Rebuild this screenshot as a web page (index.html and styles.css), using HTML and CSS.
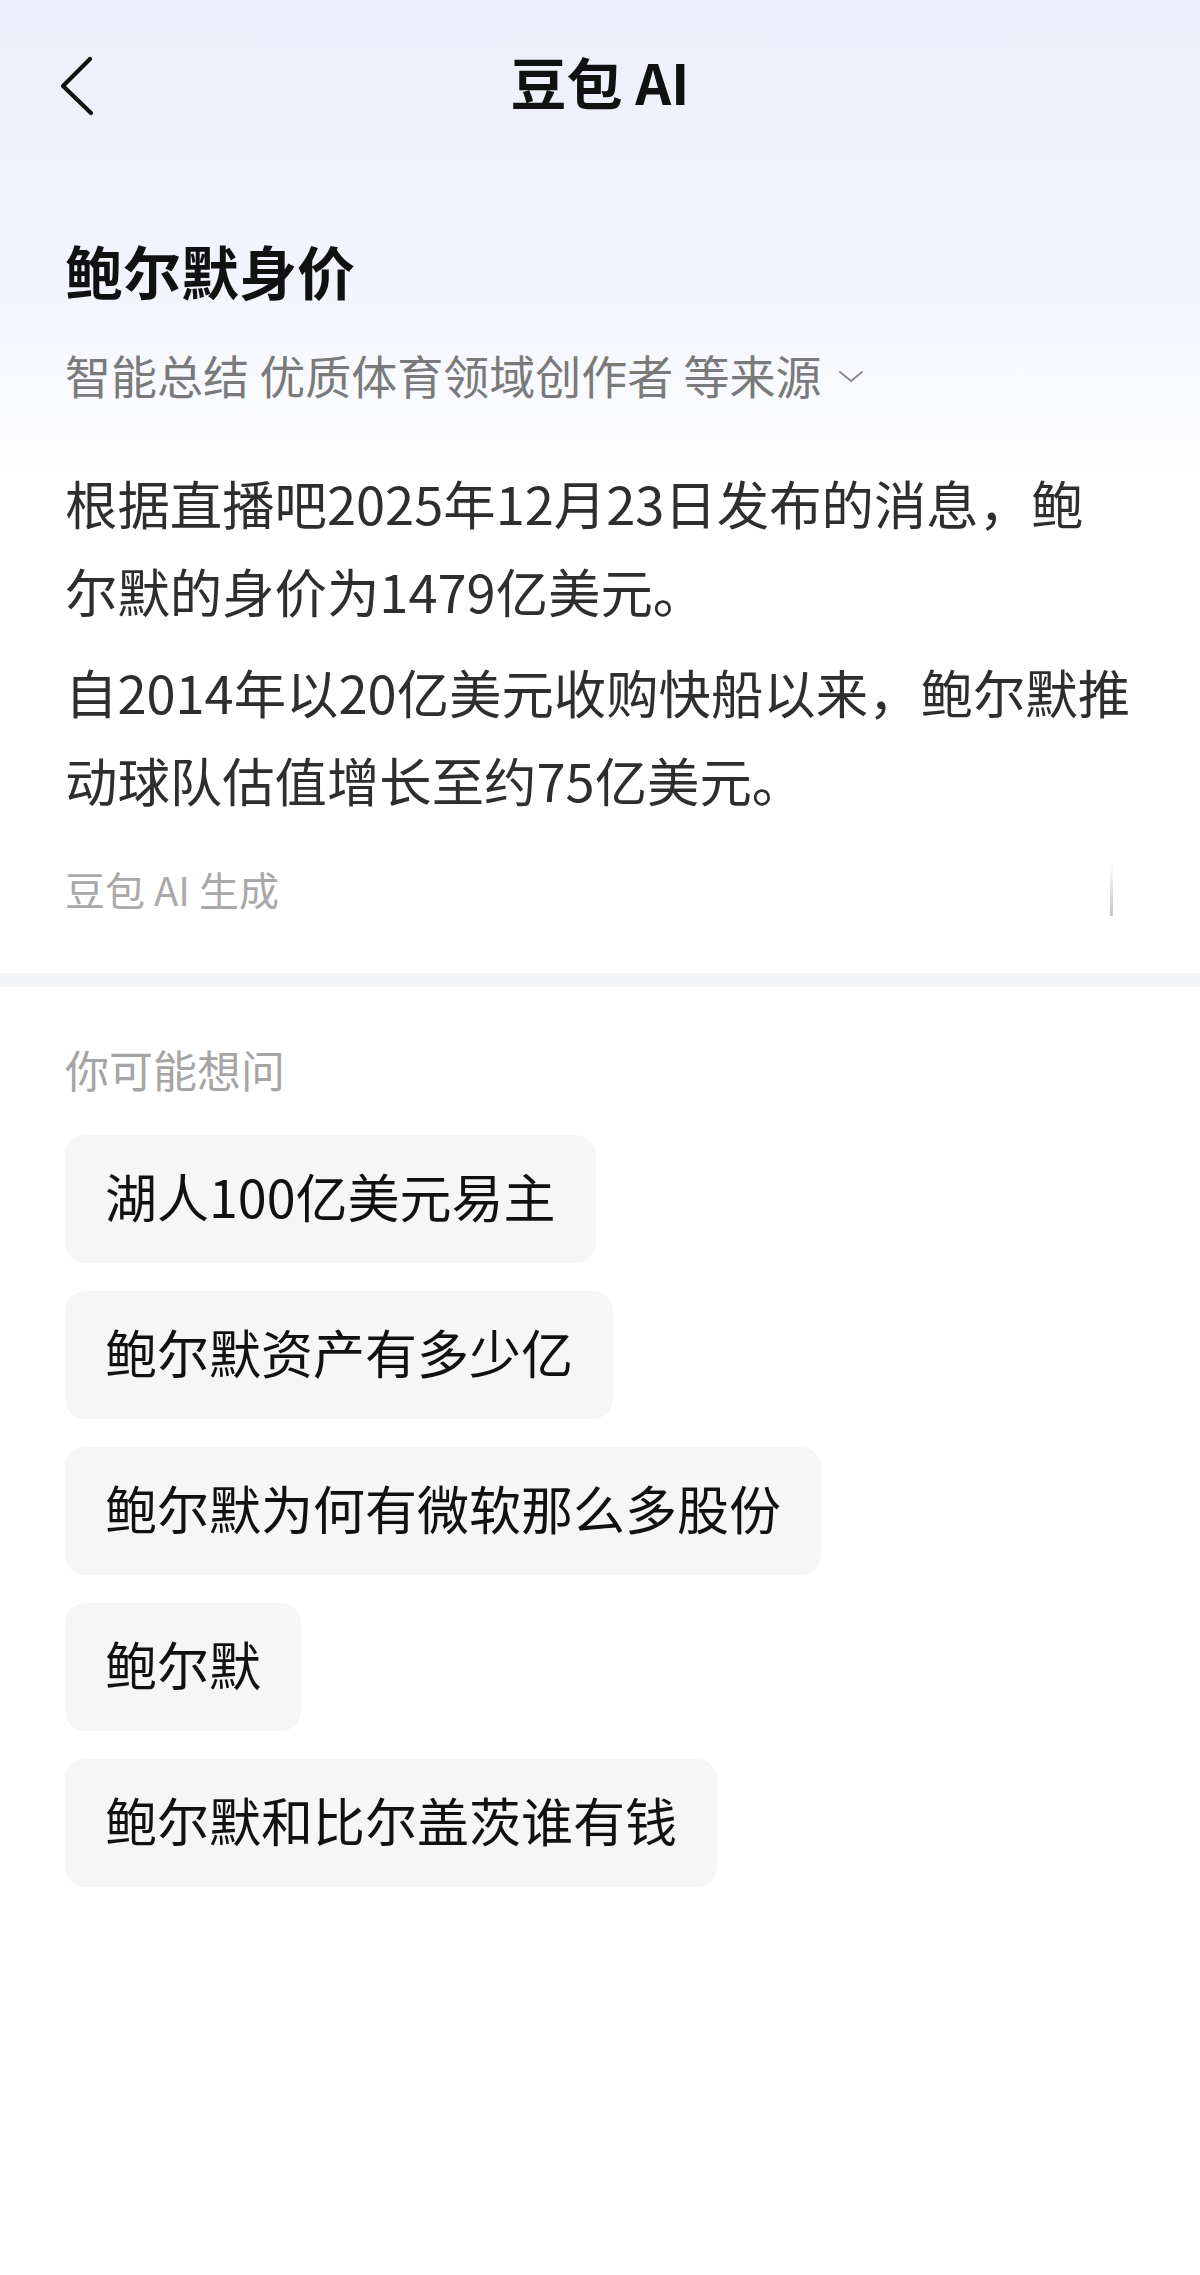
FILE: index.html
```html
<!DOCTYPE html>
<html lang="zh-CN">
<head>
    <meta charset="UTF-8">
    <meta name="viewport" content="width=device-width, initial-scale=1.0">
    <title>豆包 AI</title>
    <link rel="stylesheet" href="styles.css">
</head>
<body>
    <header class="top-bar">
        <a class="back" href="#" aria-label="返回">
            <svg width="40" height="64" viewBox="0 0 40 64">
                <polyline points="30,5 3,32 31,59" fill="none" stroke="#111" stroke-width="4.2" stroke-linecap="round" stroke-linejoin="round"/>
            </svg>
        </a>
        <div class="title">豆包 AI</div>
    </header>

    <section class="answer">
        <h1>鲍尔默身价</h1>
        <div class="sources">
            智能总结 优质体育领域创作者 等来源
            <svg class="caret" width="26" height="14" viewBox="0 0 26 14">
                <polyline points="2,2 13,11 24,2" fill="none" stroke="#8a8a8a" stroke-width="2" stroke-linecap="round" stroke-linejoin="round"/>
            </svg>
        </div>
        <p>根据直播吧2025年12月23日发布的消息，鲍<br>尔默的身价为1479亿美元。</p>
        <p>自2014年以20亿美元收购快船以来，鲍尔默推动球队估值增长至约75亿美元。</p>
        <div class="generated">
            <span>豆包 AI 生成</span>
            <span class="fade-bar"></span>
        </div>
    </section>

    <div class="divider"></div>

    <section class="suggest">
        <div class="suggest-label">你可能想问</div>
        <div class="chips">
            <a class="chip" href="#">湖人100亿美元易主</a>
            <a class="chip" href="#">鲍尔默资产有多少亿</a>
            <a class="chip" href="#">鲍尔默为何有微软那么多股份</a>
            <a class="chip" href="#">鲍尔默</a>
            <a class="chip" href="#">鲍尔默和比尔盖茨谁有钱</a>
        </div>
    </section>
</body>
</html>
```

FILE: styles.css
```css
html, body {
    margin: 0;
    padding: 0;
}
body {
    width: 1200px;
    min-height: 2275px;
    font-family: "Noto Sans CJK SC", "Noto Sans", sans-serif;
    color: #111;
    background: linear-gradient(180deg, #edf0fc 0, #f1f3fd 260px, #fafbff 400px, #fff 480px) no-repeat, #fff;
}
a {
    color: inherit;
    text-decoration: none;
}
.top-bar {
    height: 168px;
    display: grid;
    grid-template-columns: 1fr auto 1fr;
    align-items: center;
    padding: 0 60px;
}
.back {
    display: flex;
    align-items: center;
    margin-top: 4px;
}
.title {
    font-size: 56px;
    font-weight: 700;
    line-height: 70px;
    margin-top: -6px;
}
.answer {
    padding: 0 45px 56px 65px;
}
h1 {
    margin: 62px 0 0;
    font-size: 58px;
    line-height: 80px;
    font-weight: 700;
}
.sources {
    margin-top: 34px;
    font-size: 46px;
    line-height: 60px;
    color: #7a7a7a;
    display: flex;
    align-items: center;
}
.caret {
    margin-left: 16px;
    margin-top: 6px;
}
.answer p {
    margin: 13px 0 0;
    font-size: 52.4px;
    line-height: 88px;
    color: #2e2e2e;
}
.answer .sources + p {
    margin-top: 54px;
}
.generated {
    margin-top: 38px;
    display: flex;
    justify-content: space-between;
    align-items: center;
    font-size: 40px;
    line-height: 56px;
    color: #a9a9a9;
}
.fade-bar {
    width: 3px;
    height: 54px;
    margin-right: 42px;
    background: linear-gradient(180deg, rgba(200, 200, 200, 0), #c4c4c4);
}
.divider {
    height: 14px;
    background-color: #f4f5f7;
}
.suggest {
    padding: 52px 65px 0;
}
.suggest-label {
    font-size: 44px;
    line-height: 60px;
    color: #a5a5a5;
}
.chips {
    margin-top: 36px;
    display: flex;
    flex-direction: column;
    align-items: flex-start;
    gap: 28px;
}
.chip {
    display: block;
    padding: 25px 40px 31px;
    font-size: 52px;
    line-height: 72px;
    background-color: #f6f6f6;
    border-radius: 20px;
    color: #111;
}
```
